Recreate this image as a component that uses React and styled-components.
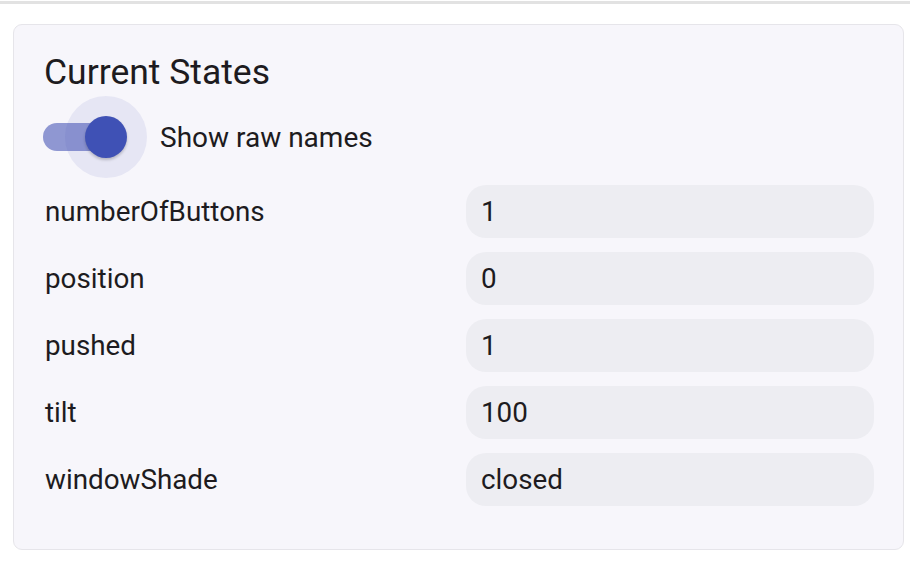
import React from 'react'
import styled, { createGlobalStyle } from 'styled-components'

const Global = createGlobalStyle`
  html, body {
    margin: 0;
    padding: 0;
    background: #ffffff;
    font-family: Roboto, "Liberation Sans", sans-serif;
    color: #1d1b20;
  }
`

const Page = styled.div`
  width: 910px;
  min-height: 566px;
  border-top: 3px solid #e2e2e2;
  margin-top: 1px;
  padding: 20px 6px 0 13px;
  box-sizing: border-box;
`

const Card = styled.section`
  background: #f7f6fb;
  border: 1.5px solid #e6e5ea;
  border-radius: 9px;
  padding: 26px 29px 43px 30px;
`

const Title = styled.h2`
  margin: 0;
  font-size: 35.5px;
  font-weight: 400;
  line-height: 42px;
`

const SwitchRow = styled.label`
  display: flex;
  align-items: center;
  height: 82px;
  margin-top: 3px;
  gap: 13px;
  font-size: 28px;
`

const SwitchBox = styled.span`
  position: relative;
  display: flex;
  align-items: center;
  width: 104px;
  height: 82px;
  margin-left: -1px;
`

const Track = styled.span`
  width: 70px;
  height: 28px;
  border-radius: 14px;
  background: ${p => (p.$on ? '#8f97d2' : '#bdbdbd')};
`

const Thumb = styled.span`
  position: absolute;
  left: 42px;
  top: 20px;
  width: 42px;
  height: 42px;
  border-radius: 50%;
  background: #3f51b5;
  box-shadow: 0 0 0 20px rgba(63, 81, 181, 0.09), 0 2px 3px rgba(0, 0, 0, 0.22);
`

const Grid = styled.div`
  display: grid;
  grid-template-columns: 1fr 1fr;
  column-gap: 14px;
  row-gap: 14px;
  margin-top: 7px;
`

const Name = styled.div`
  display: flex;
  align-items: center;
  height: 53px;
  padding-left: 1px;
  font-size: 27.8px;
`

const Value = styled.div`
  display: flex;
  align-items: center;
  height: 53px;
  padding: 0 15px;
  border-radius: 20px;
  background: #ededf2;
  font-size: 27.8px;
`

const states = [
  ['numberOfButtons', '1'],
  ['position', '0'],
  ['pushed', '1'],
  ['tilt', '100'],
  ['windowShade', 'closed'],
]

export default function App() {
  return (
    <>
      <Global />
      <Page>
        <Card>
          <Title>Current States</Title>
          <SwitchRow>
            <SwitchBox>
              <Track $on />
              <Thumb />
            </SwitchBox>
            Show raw names
          </SwitchRow>
          <Grid>
            {states.map(([name, value]) => (
              <React.Fragment key={name}>
                <Name>{name}</Name>
                <Value>{value}</Value>
              </React.Fragment>
            ))}
          </Grid>
        </Card>
      </Page>
    </>
  )
}
